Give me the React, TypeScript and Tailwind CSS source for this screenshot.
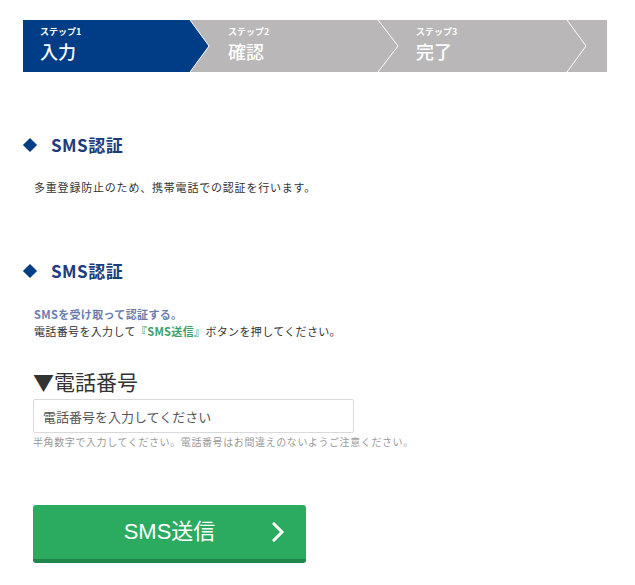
import React from 'react';

const steps = [
  { label: 'ステップ1', title: '入力' },
  { label: 'ステップ2', title: '確認' },
  { label: 'ステップ3', title: '完了' },
];

const Stepper: React.FC = () => (
  <div className="relative h-[52px] w-[584px] bg-[#b9b7b8]">
    {/* 矢印の図形 */}
    <svg className="absolute inset-0" width="584" height="52" viewBox="0 0 584 52">
      <polygon points="0,0 167,0 186,26 167,52 0,52" fill="#003d87" />
      <polyline points="167,0 186,26 167,52" fill="none" stroke="#ffffff" strokeWidth="1" />
      <polyline points="355,0 375,26 355,52" fill="none" stroke="#ffffff" strokeWidth="1" />
      <polyline points="544,0 563,26 544,52" fill="none" stroke="#ffffff" strokeWidth="1" />
    </svg>
    <div className="relative flex h-full">
      {steps.map((s) => (
        <div key={s.label} className="w-[188px] pl-[17px] pt-[5px] text-white">
          <p className="text-[9px] font-bold leading-[13px]">{s.label}</p>
          <p className="text-[18px] font-medium leading-[26px]">{s.title}</p>
        </div>
      ))}
    </div>
  </div>
);

const SectionTitle: React.FC<{ children: React.ReactNode }> = ({ children }) => (
  <h2 className="flex items-center gap-[16px] pl-[2px] text-[17px] font-bold leading-[20px] tracking-[0.5px] text-[#1b3d7d]">
    <span className="block h-[10px] w-[10px] rotate-45 bg-[#003d87]" />
    {children}
  </h2>
);

export default function App() {
  return (
    <div
      className="min-h-[585px] w-[635px] bg-white text-[#333]"
      style={{ fontFamily: '"Noto Sans CJK JP", "Noto Sans", sans-serif' }}
    >
      <div className="pl-[23px] pt-[20px]">
        <Stepper />

        <div className="mt-[63px]">
          <SectionTitle>SMS認証</SectionTitle>
        </div>
        <p className="mt-[24px] pl-[11px] text-[11px] leading-[16px] tracking-[0.8px] text-[#333]">
          多重登録防止のため、携帯電話での認証を行います。
        </p>

        <div className="mt-[66px]">
          <SectionTitle>SMS認証</SectionTitle>
        </div>
        <div className="mt-[25px] pl-[11px] text-[11px] leading-[17px] tracking-[0.35px]">
          <p className="font-bold text-[#6a7cae]">SMSを受け取って認証する。</p>
          <p className="text-[#333]">
            電話番号を入力して<span className="font-bold text-[#3d9f67]">『SMS送信』</span>ボタンを押してください。
          </p>
        </div>

        <div className="mt-[27px] pl-[10px]">
          <p className="text-[21px] leading-[28px] text-[#333]">▼電話番号</p>
          <input
            type="text"
            placeholder="電話番号を入力してください"
            className="mt-[4px] block h-[34px] w-[321px] rounded-[2px] border border-[#d9d9d9] px-[9px] text-[13px] text-[#333] outline-none placeholder:text-[#555]"
          />
          <p className="mt-[2px] text-[10px] leading-[14px] tracking-[0.6px] text-[#999]">
            半角数字で入力してください。電話番号はお間違えのないようご注意ください。
          </p>

          <button
            type="button"
            className="relative mt-[56px] flex h-[58px] w-[273px] items-center justify-center rounded-[3px] border-b-[4px] border-[#1f8548] bg-[#2aab5f] text-white"
          >
            <span className="text-[22px] leading-none" style={{ fontFamily: '"Liberation Sans", "Noto Sans CJK JP", sans-serif' }}>
              SMS送信
            </span>
            <svg className="absolute right-[21px] top-[17px]" width="13" height="20" viewBox="0 0 13 20">
              <polyline points="2,2 10,10 2,18" fill="none" stroke="#ffffff" strokeWidth="3" strokeLinecap="square" />
            </svg>
          </button>
        </div>
      </div>
    </div>
  );
}
